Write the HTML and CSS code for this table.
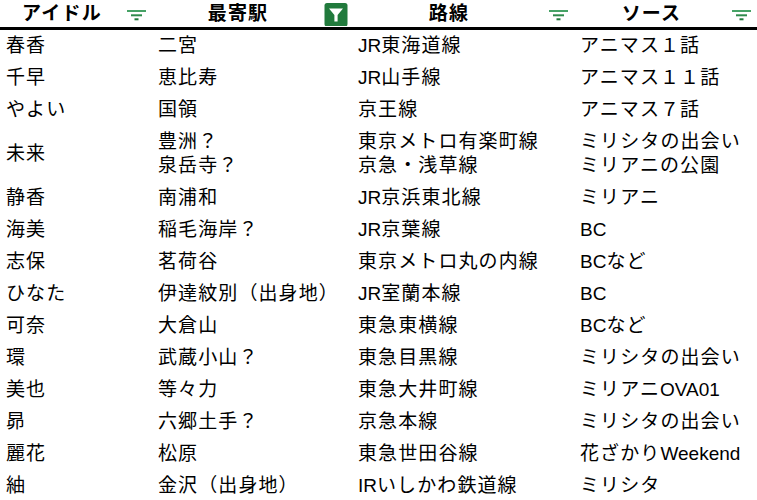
FILE: index.html
```html
<!DOCTYPE html>
<html lang="ja">
<head>
<meta charset="utf-8">
<link rel="stylesheet" href="styles.css">
</head>
<body>
<table class="grid">
  <colgroup>
    <col class="c1"><col class="c2"><col class="c3"><col class="c4">
  </colgroup>
  <thead>
    <tr>
      <th><div class="hcell"><span class="htext">アイドル</span><svg class="filter" viewBox="0 0 24 24"><rect x="3" y="8" width="19" height="2" fill="#46a266"/><rect x="7" y="12.3" width="11" height="2" fill="#2f8a4c"/><rect x="10.5" y="16.3" width="4" height="2" fill="#1f7a3a"/></svg></div></th>
      <th><div class="hcell"><span class="htext">最寄駅</span><svg class="filter active" viewBox="0 0 24 24"><rect x="0.5" y="1" width="23" height="23.5" rx="2.5" fill="#217a3c"/><polygon points="5,6.5 19,6.5 13.6,13 13.6,19.5 10.4,19.5 10.4,13" fill="#fff"/></svg></div></th>
      <th><div class="hcell"><span class="htext">路線</span><svg class="filter" viewBox="0 0 24 24"><rect x="3" y="8" width="19" height="2" fill="#46a266"/><rect x="7" y="12.3" width="11" height="2" fill="#2f8a4c"/><rect x="10.5" y="16.3" width="4" height="2" fill="#1f7a3a"/></svg></div></th>
      <th><div class="hcell"><span class="htext">ソース</span><svg class="filter" viewBox="0 0 24 24"><rect x="3" y="8" width="19" height="2" fill="#46a266"/><rect x="7" y="12.3" width="11" height="2" fill="#2f8a4c"/><rect x="10.5" y="16.3" width="4" height="2" fill="#1f7a3a"/></svg></div></th>
    </tr>
  </thead>
  <tbody>
    <tr><td>春香</td><td>二宮</td><td><span class="lat">JR</span>東海道線</td><td>アニマス１話</td></tr>
    <tr><td>千早</td><td>恵比寿</td><td><span class="lat">JR</span>山手線</td><td>アニマス１１話</td></tr>
    <tr><td>やよい</td><td>国領</td><td>京王線</td><td>アニマス７話</td></tr>
    <tr><td>未来</td><td>豊洲？<br>泉岳寺？</td><td>東京メトロ有楽町線<br>京急・浅草線</td><td>ミリシタの出会い<br>ミリアニの公園</td></tr>
    <tr><td>静香</td><td>南浦和</td><td><span class="lat">JR</span>京浜東北線</td><td>ミリアニ</td></tr>
    <tr><td>海美</td><td>稲毛海岸？</td><td><span class="lat">JR</span>京葉線</td><td><span class="lat">BC</span></td></tr>
    <tr><td>志保</td><td>茗荷谷</td><td>東京メトロ丸の内線</td><td><span class="lat">BC</span>など</td></tr>
    <tr><td>ひなた</td><td>伊達紋別（出身地）</td><td><span class="lat">JR</span>室蘭本線</td><td><span class="lat">BC</span></td></tr>
    <tr><td>可奈</td><td>大倉山</td><td>東急東横線</td><td><span class="lat">BC</span>など</td></tr>
    <tr><td>環</td><td>武蔵小山？</td><td>東急目黒線</td><td>ミリシタの出会い</td></tr>
    <tr><td>美也</td><td>等々力</td><td>東急大井町線</td><td>ミリアニ<span class="lat">OVA01</span></td></tr>
    <tr><td>昴</td><td>六郷土手？</td><td>京急本線</td><td>ミリシタの出会い</td></tr>
    <tr><td>麗花</td><td>松原</td><td>東急世田谷線</td><td>花ざかり<span class="lat">Weekend</span></td></tr>
    <tr><td>紬</td><td>金沢（出身地）</td><td><span class="lat">IR</span>いしかわ鉄道線</td><td>ミリシタ</td></tr>
  </tbody>
</table>
</body>
</html>
```

FILE: styles.css
```css
html, body {
  margin: 0;
  padding: 0;
  background: #fff;
}
body {
  font-family: "Liberation Sans", "Noto Sans CJK JP", sans-serif;
  font-size: 19px;
  color: #000;
  width: 757px;
  overflow: hidden;
}
.grid {
  border-collapse: collapse;
  table-layout: fixed;
  width: 757px;
}
.c1 { width: 152px; }
.c2 { width: 200px; }
.c3 { width: 222px; }
.c4 { width: 183px; }

.grid th {
  height: 27px;
  padding: 0;
  border-bottom: 3px solid #000;
  font-weight: bold;
  letter-spacing: 1.2px;
}
.hcell {
  display: flex;
  align-items: center;
  height: 27px;
  padding-right: 4px;
}
.htext {
  flex: 1;
  text-align: center;
  line-height: 24px;
}
.filter {
  width: 24px;
  height: 24px;
  flex: none;
}
.grid td {
  padding: 4px 6px;
  line-height: 24px;
  vertical-align: middle;
  white-space: nowrap;
  letter-spacing: 1.1px;
}
.lat {
  letter-spacing: 0;
  font-size: 19px;
}
```
